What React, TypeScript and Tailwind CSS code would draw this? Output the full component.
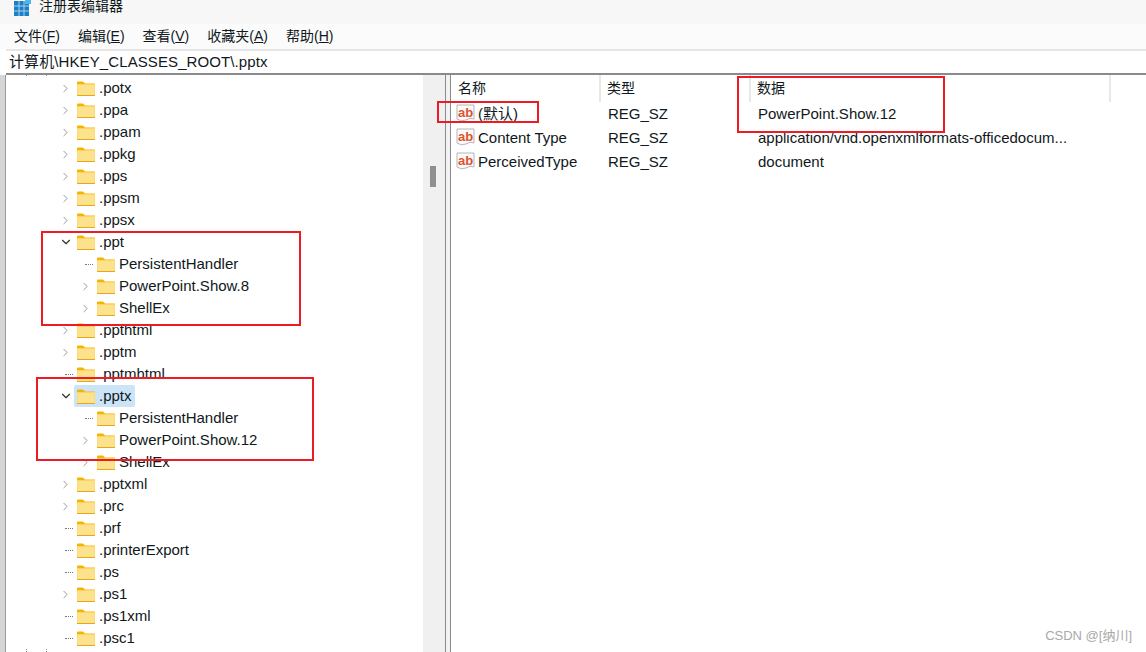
import { ChevronDown, ChevronRight } from "lucide-react";

type Row = { label: string; level: 0 | 1; arrow?: "open" | "closed"; selected?: boolean };

const rows: Row[] = [
  { label: ".potx", level: 0, arrow: "closed" },
  { label: ".ppa", level: 0, arrow: "closed" },
  { label: ".ppam", level: 0, arrow: "closed" },
  { label: ".ppkg", level: 0, arrow: "closed" },
  { label: ".pps", level: 0, arrow: "closed" },
  { label: ".ppsm", level: 0, arrow: "closed" },
  { label: ".ppsx", level: 0, arrow: "closed" },
  { label: ".ppt", level: 0, arrow: "open" },
  { label: "PersistentHandler", level: 1 },
  { label: "PowerPoint.Show.8", level: 1, arrow: "closed" },
  { label: "ShellEx", level: 1, arrow: "closed" },
  { label: ".ppthtml", level: 0, arrow: "closed" },
  { label: ".pptm", level: 0, arrow: "closed" },
  { label: ".pptmhtml", level: 0 },
  { label: ".pptx", level: 0, arrow: "open", selected: true },
  { label: "PersistentHandler", level: 1 },
  { label: "PowerPoint.Show.12", level: 1, arrow: "closed" },
  { label: "ShellEx", level: 1, arrow: "closed" },
  { label: ".pptxml", level: 0, arrow: "closed" },
  { label: ".prc", level: 0, arrow: "closed" },
  { label: ".prf", level: 0 },
  { label: ".printerExport", level: 0 },
  { label: ".ps", level: 0 },
  { label: ".ps1", level: 0, arrow: "closed" },
  { label: ".ps1xml", level: 0 },
  { label: ".psc1", level: 0 },
];

const values = [
  { name: "(默认)", type: "REG_SZ", data: "PowerPoint.Show.12" },
  { name: "Content Type", type: "REG_SZ", data: "application/vnd.openxmlformats-officedocum..." },
  { name: "PerceivedType", type: "REG_SZ", data: "document" },
];

function Folder() {
  return (
    <svg width="18" height="15" viewBox="0 0 18 15" className="shrink-0">
      <path d="M0 1.5 Q0 0.5 1 0.5 H6 L8 2.5 H18 V5 H0 Z" fill="#f5b400" />
      <rect x="0" y="3" width="18" height="12" fill="#fcd462" />
      <rect x="0.5" y="4" width="17" height="10.5" fill="#fde28e" />
      <rect x="0" y="14" width="18" height="1" fill="#e6a817" />
    </svg>
  );
}

function RegIcon() {
  return (
    <svg width="20" height="20" viewBox="0 0 20 20" className="shrink-0">
      <path d="M1 1 H18 V15 Q14 13 10 16 Q5 18 1 15 Z" fill="#fafafa" stroke="#b5b5b5" />
      <text x="2" y="12.5" fontSize="13" fontWeight="700" fill="#e0512f" fontFamily="'Liberation Sans', sans-serif">
        ab
      </text>
    </svg>
  );
}

function TreeRow({ row }: { row: Row }) {
  return (
    <div className={`h-[22px] flex items-center ${row.level === 1 ? "pl-[71px]" : "pl-[51px]"}`}>
      <div className="w-[17px] shrink-0 flex items-center justify-center">
        {row.arrow === "closed" && <ChevronRight size={13} strokeWidth={1.6} className="text-[#8a8a8a]" />}
        {row.arrow === "open" && <ChevronDown size={14} strokeWidth={2} className="text-[#333333]" />}
        {!row.arrow && <div className="ml-[6px] w-[8px] border-t border-dotted border-[#777777]" />}
      </div>
      <div className={`flex items-center h-[22px] pl-[3px] pr-[3px] rounded-[2px] ${row.selected ? "bg-[#cce4f7]" : ""}`}>
        <Folder />
        <span className="ml-[4px] text-[15px] text-[#101820] whitespace-nowrap">{row.label}</span>
      </div>
    </div>
  );
}

export default function App() {
  return (
    <div className="relative w-[1146px] h-[652px] overflow-hidden bg-white font-['Liberation_Sans','Noto_Sans_CJK_SC',sans-serif] text-[15px] text-[#101820]">
      {/* Title */}
      <div className="h-[24px] bg-[#f7f7f7] flex items-start pl-[14px]">
        <svg width="17" height="16" viewBox="0 0 17 16" className="shrink-0">
          <rect x="0" y="1" width="15" height="15" fill="#1f7fc4" />
          <path d="M5 1 V16 M10 1 V16 M0 6 H15 M0 11 H15" stroke="#9fd3f2" strokeWidth="1" />
          <rect x="11" y="0" width="6" height="4" fill="#4fb4ea" />
        </svg>
        <span className="ml-[8px] -mt-[4px] text-[14px] leading-[20px]">注册表编辑器</span>
      </div>

      {/* Menu */}
      <div className="h-[25px] bg-[#fbfbfb] flex items-center pl-[14px] gap-[18px] text-[14px]">
        <span>文件(<u>F</u>)</span>
        <span>编辑(<u>E</u>)</span>
        <span>查看(<u>V</u>)</span>
        <span>收藏夹(<u>A</u>)</span>
        <span>帮助(<u>H</u>)</span>
      </div>

      {/* Address */}
      <div className="h-[26px] ml-[6px] bg-white border-t-2 border-b-2 border-t-[#e6e6e6] border-b-[#8a8a8e] pl-[3px] flex items-center text-[15px] tracking-[0.1px]">
        计算机\HKEY_CLASSES_ROOT\.pptx
      </div>

      <div className="flex h-[577px]">
        {/* Left window edge */}
        <div className="w-[6px] shrink-0 bg-[#d5d6d8] border-r border-[#9a9a9e]" />

        {/* Tree */}
        <div className="w-[417px] shrink-0 relative overflow-hidden pt-[2px]">
          <div className="absolute left-[20px] top-0 bottom-0 border-l border-dotted border-[#8a8a8a]" />
          <div className="absolute left-[40px] top-0 bottom-0 border-l border-dotted border-[#8a8a8a]" />
          <div className="absolute inset-x-0 top-[2px] bg-white">
            {rows.map((row, i) => (
              <TreeRow key={i} row={row} />
            ))}
          </div>
        </div>

        {/* Scrollbar */}
        <div className="w-[22px] shrink-0 bg-[#f0f0f0] pl-[7px] pt-[91px]">
          <div className="w-[6px] h-[21px] bg-[#8f8f8f]" />
        </div>

        {/* Splitter */}
        <div className="w-[6px] shrink-0 bg-[#f2f2f2] border-x border-[#8a8a8e]" />

        {/* Values */}
        <div className="flex-1 min-w-0">
          <div className="h-[27px] flex items-center text-[14px]">
            <div className="w-[150px] pl-[7px] h-full flex items-center border-r-2 border-[#e8e8e8]">名称</div>
            <div className="w-[150px] pl-[6px] h-full flex items-center border-r-2 border-[#e8e8e8]">类型</div>
            <div className="w-[360px] pl-[6px] h-full flex items-center border-r-2 border-[#e8e8e8]">数据</div>
          </div>
          {values.map((v) => (
            <div key={v.name} className="h-[24px] flex items-center">
              <div className="w-[150px] pl-[5px] flex items-center">
                <RegIcon />
                <span className="ml-[2px] whitespace-nowrap">{v.name}</span>
              </div>
              <div className="w-[150px] pl-[7px]">{v.type}</div>
              <div className="pl-[7px] whitespace-nowrap">{v.data}</div>
            </div>
          ))}
        </div>
      </div>

      {/* Red annotation boxes */}
      <div className="absolute left-[41px] top-[231px] w-[260px] h-[95px] border-2 border-[#ed1c24]" />
      <div className="absolute left-[36px] top-[377px] w-[278px] h-[84px] border-2 border-[#ed1c24]" />
      <div className="absolute left-[437px] top-[101px] w-[102px] h-[22px] border-2 border-[#ed1c24]" />
      <div className="absolute left-[737px] top-[76px] w-[208px] h-[57px] border-2 border-[#ed1c24]" />

      {/* Watermark */}
      <div className="absolute right-[14px] top-[628px] text-[13px] leading-[16px] text-[#a8a8a8]">CSDN @[纳川]</div>
    </div>
  );
}
